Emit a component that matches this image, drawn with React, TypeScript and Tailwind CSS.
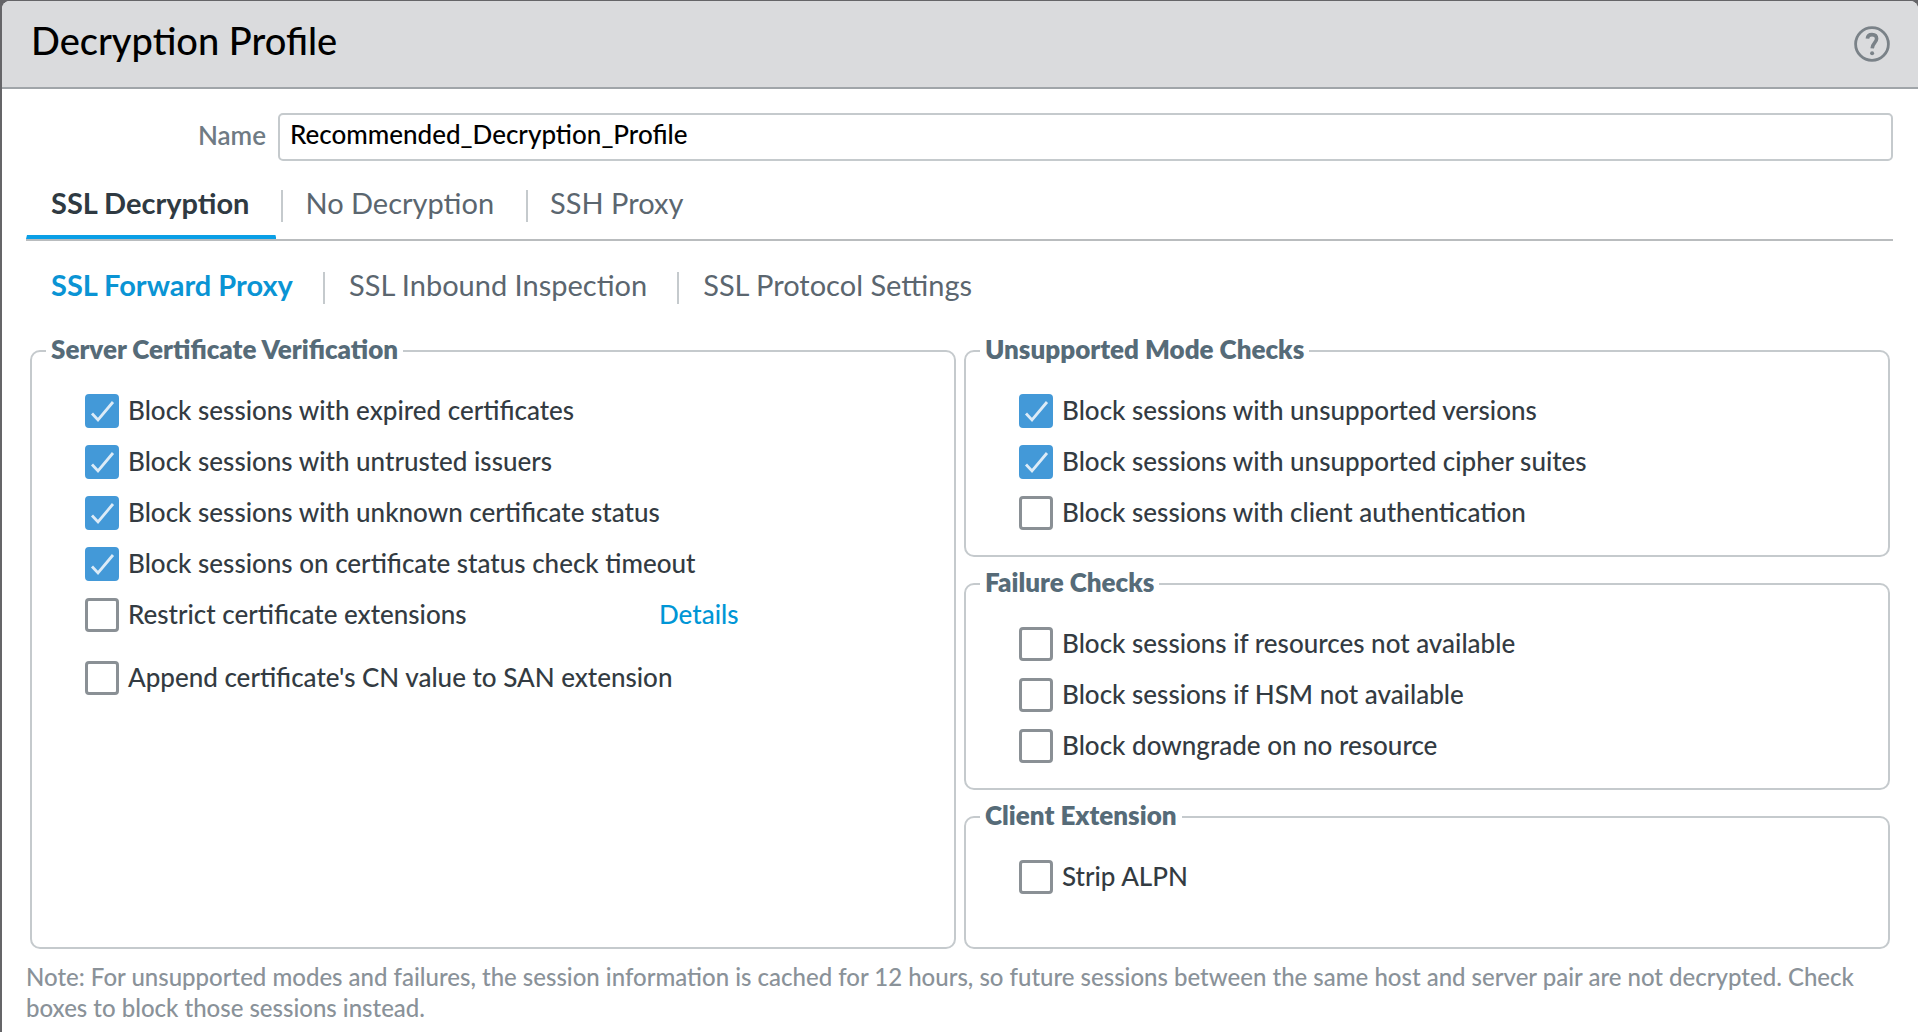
import { useState } from "react";

type Option = { label: string; checked?: boolean; details?: boolean; spaced?: boolean };

const serverChecks: Option[] = [
  { label: "Block sessions with expired certificates", checked: true },
  { label: "Block sessions with untrusted issuers", checked: true },
  { label: "Block sessions with unknown certificate status", checked: true },
  { label: "Block sessions on certificate status check timeout", checked: true },
  { label: "Restrict certificate extensions", details: true },
  { label: "Append certificate's CN value to SAN extension", spaced: true },
];

const modeChecks: Option[] = [
  { label: "Block sessions with unsupported versions", checked: true },
  { label: "Block sessions with unsupported cipher suites", checked: true },
  { label: "Block sessions with client authentication" },
];

const failureChecks: Option[] = [
  { label: "Block sessions if resources not available" },
  { label: "Block sessions if HSM not available" },
  { label: "Block downgrade on no resource" },
];

const clientChecks: Option[] = [{ label: "Strip ALPN" }];

function CheckOption({ option }: { option: Option }) {
  return (
    <div className={option.spaced ? "mt-3 flex items-center" : "flex items-center"}>
      <label className={option.details ? "flex w-[574px] items-center gap-[9px]" : "flex items-center gap-[9px]"}>
        <span className="grid size-[34px] shrink-0">
          <input
            type="checkbox"
            defaultChecked={option.checked}
            className="peer col-start-1 row-start-1 size-[34px] appearance-none rounded-[4px] border-[3px] border-[#8a9095] bg-white checked:border-[#4399d8] checked:bg-[#4399d8]"
          />
          <svg
            viewBox="0 0 34 34"
            className="pointer-events-none invisible col-start-1 row-start-1 size-[34px] peer-checked:visible"
            fill="none"
            stroke="#dcebf7"
            strokeWidth="2.8"
            aria-hidden="true"
          >
            <path d="M7 19.5 L13 26 L28 8" />
          </svg>
        </span>
        <span className="pb-0.5 leading-8">{option.label}</span>
      </label>
      {option.details && (
        <a href="#details" className="pb-0.5 leading-8 text-[#0096d6]">
          Details
        </a>
      )}
    </div>
  );
}

function Group({ title, options, grow }: { title: string; options: Option[]; grow?: boolean }) {
  return (
    <fieldset
      className={
        grow
          ? "min-w-0 flex-1 rounded-[10px] border-2 border-[#c5cacd] px-3.5 pb-[53px]"
          : "min-w-0 rounded-[10px] border-2 border-[#c5cacd] px-3.5 pb-[25px]"
      }
    >
      <legend className="px-[5px] pb-1 text-[26px] leading-7 font-extrabold text-[#566b78]">{title}</legend>
      <div className="flex flex-col gap-[17px] pt-[27px] pl-[39px] text-[26px] font-medium text-[#333b42]">
        {options.map((option) => (
          <CheckOption key={option.label} option={option} />
        ))}
      </div>
    </fieldset>
  );
}

function Tabs({ names, secondary }: { names: string[]; secondary?: boolean }) {
  const [active, setActive] = useState(names[0]);
  return (
    <div
      role="tablist"
      className={
        secondary
          ? "flex items-center pt-[31px] text-[29px] leading-[26px]"
          : "flex border-b-2 border-[#b9bcbe] text-[29px] leading-[26px]"
      }
    >
      {names.map((name, i) => {
        const on = name === active;
        const tone = on
          ? secondary
            ? "font-bold text-[#0a94d4]"
            : "font-bold text-[#2f3a42]"
          : "text-[#5b666f]";
        const inset = i === 0 ? "pl-[25px]" : secondary ? "pl-6" : "pl-[22px]";
        return (
          <div key={name} className="flex items-start">
            {i > 0 && <span className={secondary ? "h-8 w-0.5 bg-[#c5cacd]" : "ml-[5px] h-8 w-0.5 bg-[#c5cacd]"} />}
            <button
              type="button"
              role="tab"
              aria-selected={on}
              onClick={() => setActive(name)}
              className={secondary ? "pb-1.5" : "flex flex-col"}
            >
              <span className={secondary ? `${tone} ${inset} block pr-[30px]` : `${tone} ${inset} pr-[27px] pb-[19px]`}>
                {name}
              </span>
              {!secondary && on && (
                <span className="h-1 w-full bg-[#0a9fe6] [clip-path:polygon(1px_0,calc(100%-1px)_0,100%_100%,0_100%)]" />
              )}
            </button>
          </div>
        );
      })}
    </div>
  );
}

export default function App() {
  return (
    <div className="min-h-screen bg-[#656568] pt-px pl-0.5 font-['Lato','Open_Sans',sans-serif]">
      <main className="min-h-[calc(100vh-1px)] overflow-hidden rounded-t-lg bg-white">
        <header className="flex h-22 items-center justify-between border-b-2 border-[#a0a5a9] bg-[#dadbdd] pr-[28px] pl-[29px]">
          <h1 className="pb-2 text-[38px] leading-[48px] font-medium text-black">Decryption Profile</h1>
          <button type="button" aria-label="Help">
            <svg viewBox="0 0 36 36" className="size-9" fill="none" stroke="#7a8288" strokeWidth="2.8">
              <circle cx="18" cy="18" r="16.4" />
              <path d="M13.4 12.6 C13.6 9.8 15.6 8.6 18 8.6 C20.8 8.6 22.6 10.2 22.6 12.8 C22.6 16.4 18.4 17 18.2 22.4" strokeWidth="3.6" />
              <circle cx="18.1" cy="27.2" r="2" fill="#7a8288" stroke="none" />
            </svg>
          </button>
        </header>

        <div className="pt-6 pr-[25px] pl-6">
          <div className="flex items-center">
            <label
              htmlFor="profile-name"
              className="w-[252px] pr-3 pb-1 text-right text-[26px] leading-8 font-semibold text-[#6f7b84]"
            >
              Name
            </label>
            <input
              id="profile-name"
              type="text"
              defaultValue="Recommended_Decryption_Profile"
              className="h-12 min-w-0 flex-1 rounded-[5px] border-2 border-[#c5cacd] px-2.5 pb-1.5 text-[26px] font-medium text-black outline-none"
            />
          </div>

          <div className="pt-[29px]">
            <Tabs names={["SSL Decryption", "No Decryption", "SSH Proxy"]} />
            <Tabs secondary names={["SSL Forward Proxy", "SSL Inbound Inspection", "SSL Protocol Settings"]} />
          </div>

          <div className="flex gap-2 pt-[31px] pr-[3px] pl-1">
            <div className="flex flex-1 flex-col">
              <Group title="Server Certificate Verification" options={serverChecks} grow />
            </div>
            <div className="flex flex-1 flex-col gap-[11px]">
              <Group title="Unsupported Mode Checks" options={modeChecks} />
              <Group title="Failure Checks" options={failureChecks} />
              <Group title="Client Extension" options={clientChecks} grow />
            </div>
          </div>

          <p className="pt-3 text-[24px] leading-[31px] font-medium text-[#8a9299]">
            Note: For unsupported modes and failures, the session information is cached for 12 hours, so future sessions
            between the same host and server pair are not decrypted. Check boxes to block those sessions instead.
          </p>
        </div>
      </main>
    </div>
  );
}
